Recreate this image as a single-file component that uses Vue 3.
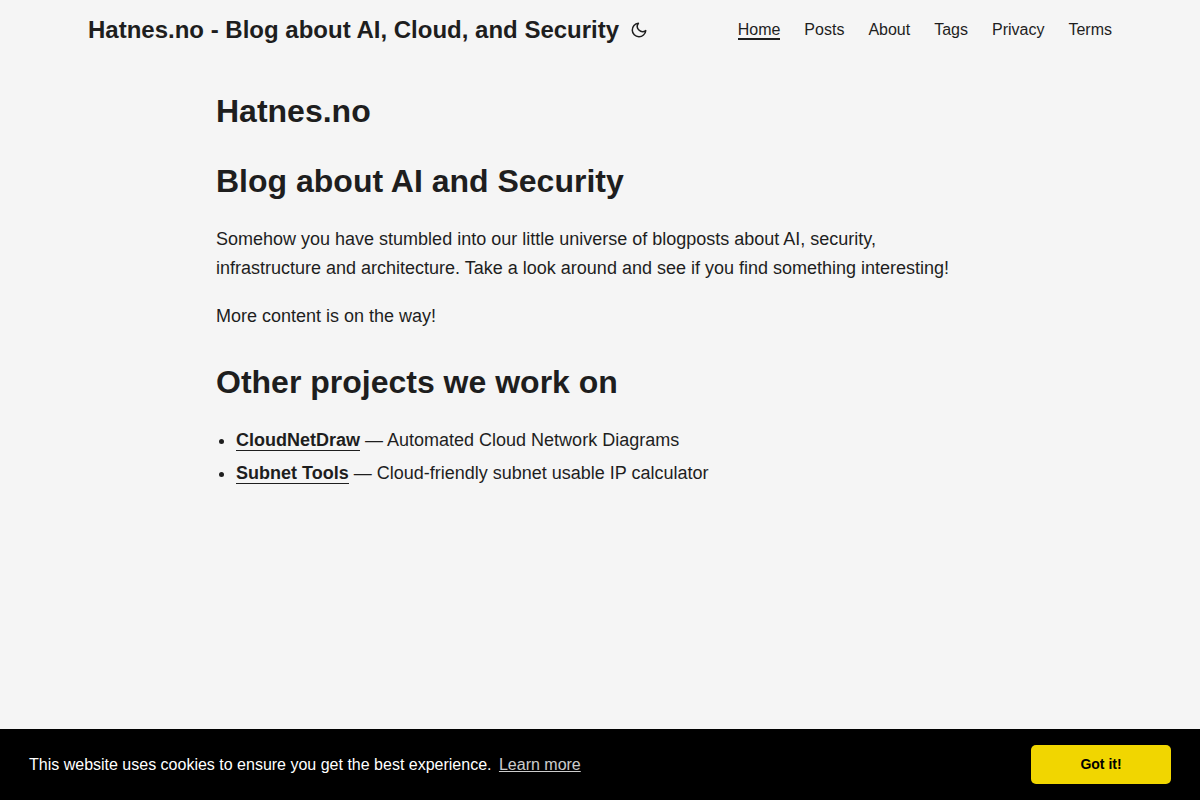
<script setup>
const links = ['Home', 'Posts', 'About', 'Tags', 'Privacy', 'Terms']
const projects = [
  { name: 'CloudNetDraw', text: 'Automated Cloud Network Diagrams' },
  { name: 'Subnet Tools', text: 'Cloud-friendly subnet usable IP calculator' },
]
</script>

<template>
  <div class="page">
    <header class="header">
      <div class="logo">
        <a href="#" class="title">Hatnes.no - Blog about AI, Cloud, and Security</a>
        <button class="theme" type="button" aria-label="Toggle theme">
          <svg width="18" height="18" viewBox="0 0 24 24" fill="none" stroke="currentColor" stroke-width="2" stroke-linecap="round" stroke-linejoin="round">
            <path d="M21 12.79A9 9 0 1 1 11.21 3 7 7 0 0 0 21 12.79z" />
          </svg>
        </button>
      </div>
      <nav class="menu">
        <a v-for="(link, i) in links" :key="link" href="#" :class="{ active: i === 0 }">{{ link }}</a>
      </nav>
    </header>
    <main class="main">
      <h1>Hatnes.no</h1>
      <h2>Blog about AI and Security</h2>
      <p>Somehow you have stumbled into our little universe of blogposts about AI, security, infrastructure and architecture. Take a look around and see if you find something interesting!</p>
      <p>More content is on the way!</p>
      <h2 class="other">Other projects we work on</h2>
      <ul>
        <li v-for="p in projects" :key="p.name"><a href="#">{{ p.name }}</a> — {{ p.text }}</li>
      </ul>
    </main>
    <div class="cookie" role="dialog" aria-label="Cookie consent">
      <span>This website uses cookies to ensure you get the best experience. <a href="#" class="learn">Learn more</a></span>
      <button type="button" class="accept">Got it!</button>
    </div>
  </div>
</template>

<style>
body {
  background: #f5f5f5;
}
</style>

<style scoped>
.page {
  min-height: 100vh;
  font-family: "Liberation Sans", Arial, sans-serif;
  font-size: 18px;
  line-height: 29px;
  color: #1e1e1e;
}
a {
  color: inherit;
  text-decoration: none;
}
.header {
  display: flex;
  justify-content: space-between;
  max-width: 1024px;
  margin: 0 auto;
  padding: 0 24px;
  line-height: 60px;
}
.logo {
  display: flex;
  align-items: center;
  gap: 11px;
}
.title {
  font-size: 24px;
  font-weight: 700;
}
.theme {
  display: flex;
  padding: 0;
  border: 0;
  background: none;
  color: inherit;
}
.menu {
  display: flex;
  align-items: center;
  gap: 24px;
  font-size: 16px;
}
.menu a {
  line-height: 20px;
}
.menu .active {
  box-shadow: inset 0 -2px 0 currentColor;
}
.main {
  max-width: 768px;
  margin: 0 auto;
  padding: 24px;
}
h1,
h2 {
  margin: 0 0 16px;
  font-size: 32px;
  line-height: 54px;
}
h2 {
  margin-bottom: 17px;
}
h2.other {
  margin-top: 24px;
}
p {
  margin: 0 0 19px;
}
ul {
  margin: 0;
  padding-left: 20px;
}
li {
  margin-bottom: 4px;
}
li a {
  font-weight: 700;
  box-shadow: 0 1px 0;
}
.cookie {
  position: fixed;
  left: 0;
  right: 0;
  bottom: 0;
  display: flex;
  align-items: center;
  justify-content: space-between;
  padding: 16px 29px;
  background: #000;
  color: #fff;
  font-size: 16px;
  line-height: 25px;
}
.learn {
  padding: 3px;
  opacity: 0.8;
  text-decoration: underline;
}
.accept {
  min-width: 140px;
  padding: 5px 10px;
  border: 0;
  border-radius: 5px;
  background: #f1d600;
  color: #000;
  font: 700 14px/29px "Liberation Sans", Arial, sans-serif;
}
</style>
